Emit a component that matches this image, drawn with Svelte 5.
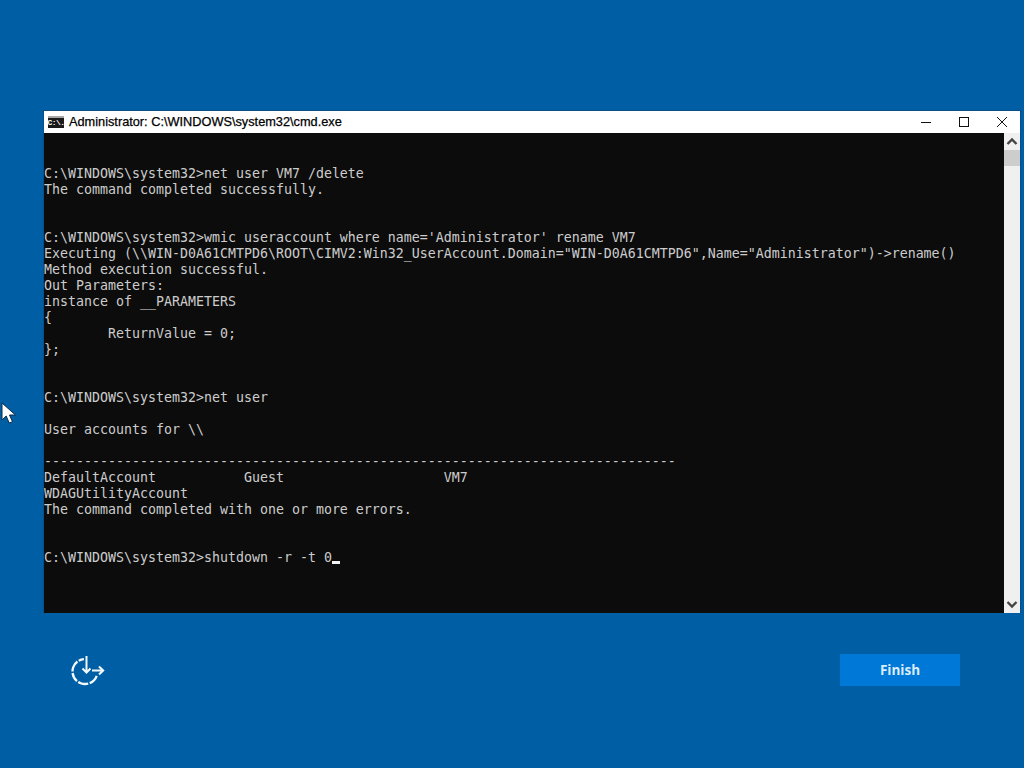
<script>
  const lines = [
    '', '',
    'C:\\WINDOWS\\system32>net user VM7 /delete',
    'The command completed successfully.',
    '', '',
    "C:\\WINDOWS\\system32>wmic useraccount where name='Administrator' rename VM7",
    'Executing (\\\\WIN-D0A61CMTPD6\\ROOT\\CIMV2:Win32_UserAccount.Domain="WIN-D0A61CMTPD6",Name="Administrator")->rename()',
    'Method execution successful.',
    'Out Parameters:',
    'instance of __PARAMETERS',
    '{',
    '        ReturnValue = 0;',
    '};',
    '', '',
    'C:\\WINDOWS\\system32>net user',
    '',
    'User accounts for \\\\',
    '',
    '-------------------------------------------------------------------------------',
    'DefaultAccount           Guest                    VM7',
    'WDAGUtilityAccount',
    'The command completed with one or more errors.',
    '', ''
  ];
</script>

<div class="page">
  <svg class="pointer" width="15" height="22" viewBox="0 0 15 22" aria-hidden="true">
    <path d="M1 1v17l4.2-4 3 7 3.3-1.3-3-6.7h6z" fill="#fff" stroke="#0a2a4a" stroke-width="1"/>
  </svg>

  <section class="window">
    <header class="titlebar">
      <span class="appicon"><span class="appicon-text">C:\.</span></span>
      <span class="title">Administrator: C:\WINDOWS\system32\cmd.exe</span>
      <div class="controls">
        <svg width="12" height="12" viewBox="0 0 12 12" aria-hidden="true"><path d="M1 6.5h10" stroke="#111" fill="none"/></svg>
        <svg width="12" height="12" viewBox="0 0 12 12" aria-hidden="true"><rect x="1.5" y="1.5" width="9" height="9" stroke="#111" fill="none"/></svg>
        <svg width="12" height="12" viewBox="0 0 12 12" aria-hidden="true"><path d="M1 1l10 10M11 1L1 11" stroke="#111" fill="none"/></svg>
      </div>
    </header>
    <div class="body">
      <pre class="console">{#each lines as line}<div class="line">{line}</div>{/each}<div class="line">C:\WINDOWS\system32&gt;shutdown -r -t 0<span class="caret"></span></div></pre>
      <div class="scrollbar">
        <svg class="arrow" width="16" height="17" viewBox="0 0 16 17" aria-hidden="true"><path d="M3.500 11l4.500-4.500 4.500 4.500" fill="none" stroke="#444" stroke-width="2.400"/></svg>
        <div class="track"><div class="thumb"></div></div>
        <svg class="arrow" width="16" height="17" viewBox="0 0 16 17" aria-hidden="true"><path d="M3.500 6l4.500 4.500 4.500-4.500" fill="none" stroke="#444" stroke-width="2.400"/></svg>
      </div>
    </div>
  </section>

  <footer class="footer">
    <svg class="reset" width="36" height="34" viewBox="0 0 36 34" aria-hidden="true">
      <circle cx="14" cy="18.500" r="12.500" pathLength="360" fill="none" stroke="#f2f8fc" stroke-width="2.300" stroke-dasharray="48 7 48 7 43 7 53 7 25 115" transform="rotate(20 14 18.500)"/>
      <path d="M15.500 3v15.500M11.500 15.500l4 4 4-4M21 17.500h11M28 13.500l4.200 4-4.200 4" fill="none" stroke="#f2f8fc" stroke-width="2"/>
    </svg>
    <button class="finish" type="button">Finish</button>
  </footer>
</div>

<style>
  :global(body) {
    margin: 0;
    background: #005fa4;
  }
  .page {
    position: relative;
    width: 1024px;
    height: 768px;
    box-sizing: border-box;
    padding: 110px 3px 0 43px;
    background: #005fa4;
    overflow: hidden;
  }
  .pointer {
    position: absolute;
    left: 1px;
    top: 402px;
  }
  .window {
    display: flex;
    flex-direction: column;
    border: 1px solid #0a4f88;
    border-bottom: 0;
    background: #fff;
  }
  .titlebar {
    display: flex;
    align-items: center;
    box-sizing: border-box;
    height: 22px;
    padding: 0 0 1px 4px;
    background: #fff;
    font-family: "Liberation Sans", Arial, sans-serif;
    font-size: 12.75px;
    color: #000;
  }
  .appicon {
    display: flex;
    align-items: center;
    justify-content: center;
    width: 16px;
    height: 12px;
    margin: 1px 5px 0 0;
    border-top: 2px solid #a8a8a8;
    box-sizing: border-box;
    background: #1a1a1a;
    overflow: hidden;
  }
  .appicon-text {
    font-family: "Liberation Mono", monospace;
    font-size: 8px;
    font-weight: bold;
    line-height: 1;
    letter-spacing: -0.6px;
    color: #fff;
  }
  .title {
    flex: 1;
    -webkit-text-stroke: 0.25px #000;
  }
  .controls {
    display: flex;
    gap: 26px;
    padding: 1px 12px 0 0;
  }
  .body {
    display: flex;
    height: 480px;
  }
  .console {
    flex: 1;
    margin: 0;
    box-sizing: border-box;
    height: 480px;
    padding-top: 1px;
    background: #0c0c0c;
    color: #cccccc;
    font-family: "DejaVu Sans Mono", monospace;
    font-size: 13.28px;
    letter-spacing: 0.01px;
    line-height: 16px;
    overflow: hidden;
  }
  .line {
    height: 16px;
    white-space: pre;
  }
  .caret {
    display: inline-block;
    width: 8px;
    height: 3px;
    background: #f2f2f2;
    vertical-align: -2px;
  }
  .scrollbar {
    display: flex;
    flex-direction: column;
    width: 16px;
    background: #f0f0f0;
  }
  .arrow {
    display: block;
    flex: none;
  }
  .track {
    flex: 1;
  }
  .thumb {
    height: 16px;
    background: #cdcdcd;
  }
  .footer {
    display: flex;
    align-items: center;
    justify-content: space-between;
    height: 32px;
    margin-top: 41px;
    padding: 0 61px 0 28px;
  }
  .reset {
    display: block;
  }
  .finish {
    width: 120px;
    height: 32px;
    border: 0;
    padding: 0;
    background: #0078d7;
    color: #dcedfa;
    font-family: "Open Sans", "Noto Sans", sans-serif;
    font-size: 13.5px;
    font-weight: 700;
  }
</style>
